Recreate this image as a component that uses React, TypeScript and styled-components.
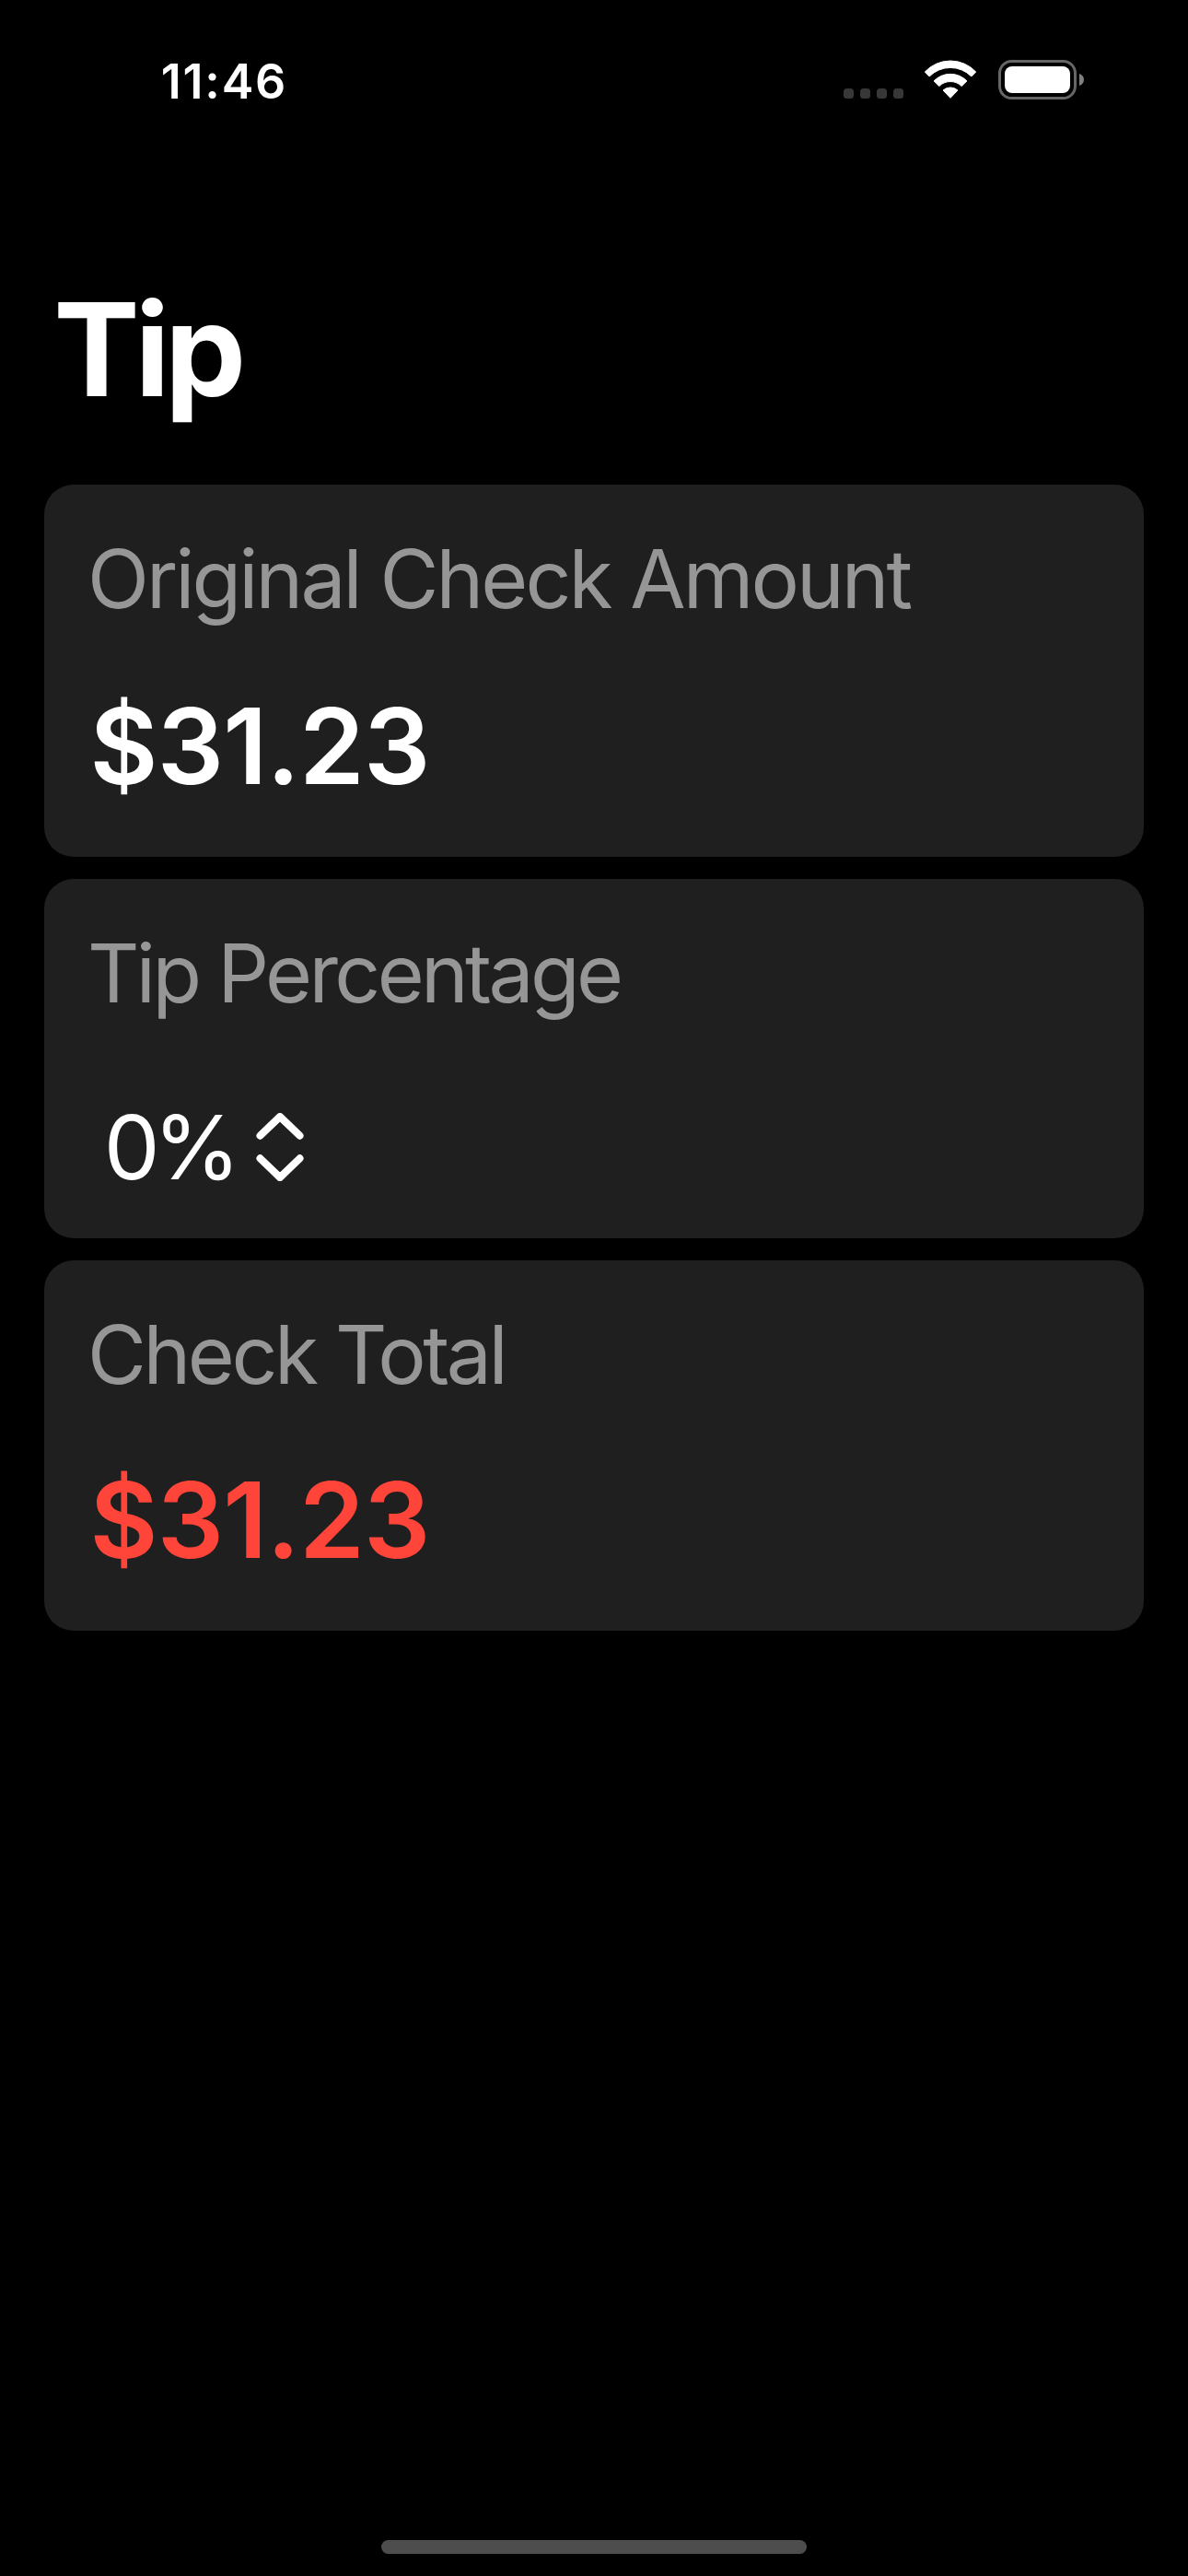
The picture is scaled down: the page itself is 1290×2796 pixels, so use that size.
import React from "react";
import styled, { createGlobalStyle } from "styled-components";

const GlobalStyle = createGlobalStyle`
  body {
    margin: 0;
    background: #000;
  }
`;

const Screen = styled.div`
  box-sizing: border-box;
  display: flex;
  flex-direction: column;
  width: 1290px;
  height: 2796px;
  overflow: hidden;
  background: #000;
  color: #fff;
  font-family: Inter, "Liberation Sans", sans-serif;
`;

const StatusBar = styled.header`
  box-sizing: border-box;
  display: flex;
  justify-content: space-between;
  height: 295px;
  padding: 57px 113px 0 174.7px;
`;

const Time = styled.time`
  padding-top: 1px;
  font-size: 52px;
  line-height: 62px;
  font-weight: 600;
  letter-spacing: 1.8px;
`;

const StatusIcons = styled.div`
  display: flex;
  align-items: flex-start;
  padding-top: 8px;
`;

const CellularDots = styled.div`
  display: flex;
  gap: 7px;
  padding-top: 31px;
  margin-right: 22px;
`;

const Dot = styled.span`
  width: 11px;
  height: 11px;
  border-radius: 3.5px;
  background: #373737;
`;

const WifiIcon = styled.svg`
  display: block;
  margin-right: 23px;
`;

const BatteryIcon = styled.svg`
  display: block;
`;

const Title = styled.h1`
  margin: 0 0 63px;
  padding-left: 58.3px;
  font-size: 140px;
  line-height: 168px;
  font-weight: 700;
  letter-spacing: -5.35px;
`;

const CardList = styled.main`
  display: flex;
  flex-direction: column;
  gap: 24px;
  padding: 0 48px;
`;

const Card = styled.section<{ $height: number }>`
  box-sizing: border-box;
  height: ${({ $height }) => $height}px;
  padding: 48px 47px 0;
  border-radius: 32px;
  background: #1f1f1f;
`;

const Label = styled.h2<{ $tracking: number }>`
  margin: 0;
  color: #969696;
  font-size: 87.5px;
  line-height: 108px;
  font-weight: 400;
  letter-spacing: ${({ $tracking }) => $tracking}px;
  white-space: nowrap;
`;

const Amount = styled.p<{ $accent?: boolean }>`
  margin: ${({ $accent }) => ($accent ? 56 : 58)}px 0 0 2.5px;
  color: ${({ $accent }) => ($accent ? "#ff453a" : "#fff")};
  font-size: 113.7px;
  line-height: 140px;
  font-weight: 600;
  letter-spacing: -0.8px;
`;

const Picker = styled.button`
  display: flex;
  align-items: center;
  gap: 24px;
  margin: 75px 0 0;
  padding: 0 0 0 17.7px;
  border: 0;
  background: none;
  color: #fff;
  font: 400 96.5px/120px Inter, "Liberation Sans", sans-serif;
  letter-spacing: -7px;
`;

const HomeIndicator = styled.div`
  width: 462px;
  height: 15px;
  margin: auto auto 24px;
  border-radius: 7.5px;
  background: #4d4d4d;
`;

export default function App() {
  return (
    <Screen>
      <GlobalStyle />
      <StatusBar>
        <Time>11:46</Time>
        <StatusIcons>
          <CellularDots>
            <Dot />
            <Dot />
            <Dot />
            <Dot />
          </CellularDots>
          <WifiIcon width="58" height="43" viewBox="0 0 58 43" fill="#fff" stroke="#fff" strokeWidth="1" strokeLinejoin="round">
            <path d="M1.3 13A38 38 0 0 1 56.7 13L51.8 18A32 32 0 0 0 6.2 18Z" />
            <path d="M11.1 22.9A25 25 0 0 1 46.9 22.9L41.2 28.5A17.5 17.5 0 0 0 16.8 28.5Z" />
            <path d="M21 33A12 12 0 0 1 37 33L29 41.3Z" />
          </WifiIcon>
          <BatteryIcon width="93" height="43" viewBox="0 0 93 43">
            <rect x="1.5" y="1.5" width="82" height="40" rx="13" fill="none" stroke="#666" strokeWidth="3" />
            <rect x="7" y="7" width="71" height="29" rx="8" fill="#fff" />
            <path d="M88 15C91 16 93 18.5 93 21.5S91 27 88 28Z" fill="#808080" />
          </BatteryIcon>
        </StatusIcons>
      </StatusBar>
      <Title>Tip</Title>
      <CardList>
        <Card $height={404}>
          <Label $tracking={-2.93}>Original Check Amount</Label>
          <Amount>$31.23</Amount>
        </Card>
        <Card $height={390}>
          <Label $tracking={-3.64}>Tip Percentage</Label>
          <Picker type="button">
            0%
            <svg width="52" height="74" viewBox="0 0 52 74" fill="none" stroke="#fff" strokeWidth="8" strokeLinecap="round" strokeLinejoin="round">
              <path d="M4.5 24.7L26 4L47.5 24.7M4.5 49.3L26 70L47.5 49.3" />
            </svg>
          </Picker>
        </Card>
        <Card $height={402}>
          <Label $tracking={-3.4}>Check Total</Label>
          <Amount $accent>$31.23</Amount>
        </Card>
      </CardList>
      <HomeIndicator />
    </Screen>
  );
}
